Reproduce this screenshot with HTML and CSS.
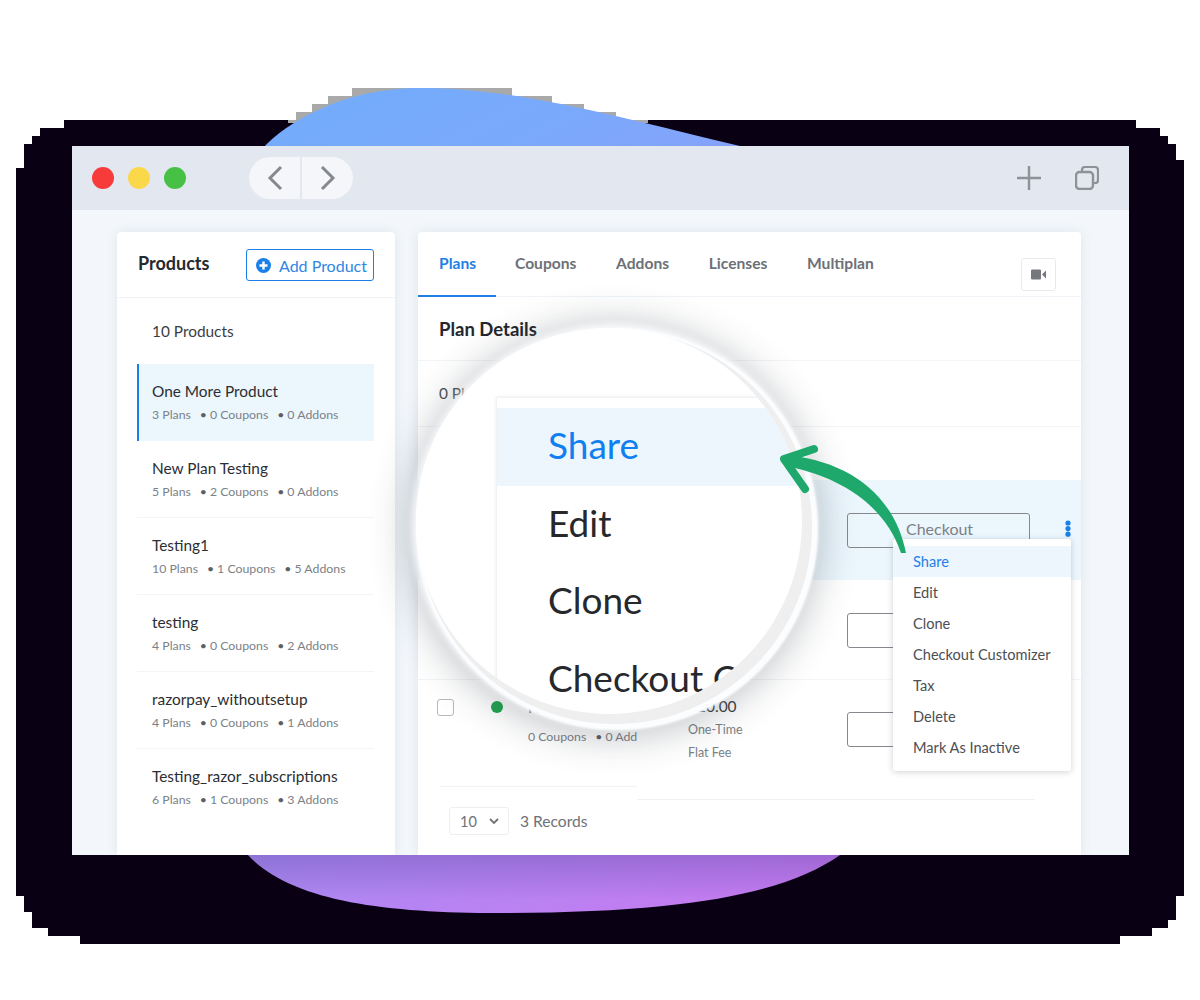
FILE: index.html
```html
<!DOCTYPE html>
<html>
<head>
	<meta charset="utf-8">
	<title>Products</title>
	<link rel="stylesheet" href="styles.css">
</head>
<body>
<div class="stage">
	<svg class="backdrop" width="1200" height="1000" viewBox="0 0 1200 1000">
		<defs>
			<linearGradient id="blobfill" gradientUnits="userSpaceOnUse" x1="350" y1="100" x2="760" y2="900">
				<stop offset="0" stop-color="#74abfb"/>
				<stop offset="0.12" stop-color="#7aa9fb"/>
				<stop offset="1" stop-color="#c47bf0"/>
			</linearGradient>
			<linearGradient id="blobshade" gradientUnits="userSpaceOnUse" x1="0" y1="855" x2="0" y2="900">
				<stop offset="0" stop-color="#4a3a90" stop-opacity="0.3"/>
				<stop offset="1" stop-color="#4a3a90" stop-opacity="0"/>
			</linearGradient>
		</defs>
		<polygon fill="#0a0013" points="64,120 1136,120 1136,128 1160,128 1160,136 1168,136 1168,144 1176,144 1176,160 1184,160 1184,896 1176,896 1176,920 1168,920 1168,928 1152,928 1152,936 1120,936 1120,944 80,944 80,936 48,936 48,928 32,928 32,912 24,912 24,896 16,896 16,168 24,168 24,144 32,144 32,136 40,136 40,128 64,128"/>
		<polygon fill="#a9a9a9" points="352,88 512,88 512,96 552,96 552,104 584,104 584,112 616,112 616,120 648,120 648,123 288,123 288,120 296,120 296,112 312,112 312,104 328,104 328,96 352,96"/>
		<path fill="url(#blobfill)" d="M265 146 C285 125 340 88 420 88 C520 88 620 118 740 146 L840 855 C790 890 700 913 500 913 C380 913 290 900 248 855 Z"/>
		<path fill="url(#blobshade)" d="M248 855 L840 855 C790 890 700 913 500 913 C380 913 290 900 248 855 Z"/>
	</svg>

	<div class="window">
		<div class="titlebar">
			<div class="lights">
				<span class="light red"></span>
				<span class="light yellow"></span>
				<span class="light green"></span>
			</div>
			<div class="nav-pill">
				<div class="nav-half">
					<svg width="18" height="26" viewBox="0 0 18 26"><path d="M15 2 L4 13 L15 24" fill="none" stroke="#85888d" stroke-width="3"/></svg>
				</div>
				<div class="nav-half">
					<svg width="18" height="26" viewBox="0 0 18 26"><path d="M3 2 L14 13 L3 24" fill="none" stroke="#85888d" stroke-width="3"/></svg>
				</div>
			</div>
			<div class="title-tools">
				<svg width="24" height="24" viewBox="0 0 24 24"><path d="M12 0 V24 M0 12 H24" stroke="#8e9196" stroke-width="2.4"/></svg>
				<svg width="24" height="24" viewBox="0 0 24 24"><path d="M7 5 V4 Q7 1 10 1 H20 Q23 1 23 4 V14 Q23 17 20 17 H19" fill="none" stroke="#8e9196" stroke-width="2.2"/><rect x="1" y="6" width="17" height="17" rx="3.5" fill="none" stroke="#8e9196" stroke-width="2.4"/></svg>
			</div>
		</div>

		<div class="workspace">
			<aside class="sidebar">
				<div class="side-head">
					<h2 class="side-title">Products</h2>
					<button class="add-btn">
						<svg class="add-icon" width="15" height="15" viewBox="0 0 15 15"><circle cx="7.5" cy="7.5" r="7.5" fill="#1a7fe8"/><path d="M7.5 3.5 V11.5 M3.5 7.5 H11.5" stroke="#fff" stroke-width="2.4"/></svg>
						Add Product
					</button>
				</div>
				<div class="side-count">10 Products</div>
				<ul class="product-list">
					<li class="product active">
						<div class="product-name">One More Product</div>
						<div class="product-meta"><span>3 Plans</span><span class="bullet">0 Coupons</span><span class="bullet">0 Addons</span></div>
					</li>
					<li class="product">
						<div class="product-name">New Plan Testing</div>
						<div class="product-meta"><span>5 Plans</span><span class="bullet">2 Coupons</span><span class="bullet">0 Addons</span></div>
					</li>
					<li class="product">
						<div class="product-name">Testing1</div>
						<div class="product-meta"><span>10 Plans</span><span class="bullet">1 Coupons</span><span class="bullet">5 Addons</span></div>
					</li>
					<li class="product">
						<div class="product-name">testing</div>
						<div class="product-meta"><span>4 Plans</span><span class="bullet">0 Coupons</span><span class="bullet">2 Addons</span></div>
					</li>
					<li class="product">
						<div class="product-name">razorpay_withoutsetup</div>
						<div class="product-meta"><span>4 Plans</span><span class="bullet">0 Coupons</span><span class="bullet">1 Addons</span></div>
					</li>
					<li class="product">
						<div class="product-name">Testing_razor_subscriptions</div>
						<div class="product-meta"><span>6 Plans</span><span class="bullet">1 Coupons</span><span class="bullet">3 Addons</span></div>
					</li>
				</ul>
			</aside>

			<section class="panel">
				<div class="tabs">
					<a class="tab current">Plans</a>
					<a class="tab">Coupons</a>
					<a class="tab">Addons</a>
					<a class="tab">Licenses</a>
					<a class="tab">Multiplan</a>
					<div class="video-btn">
						<svg width="15" height="11" viewBox="0 0 15 11"><rect x="0" y="0.5" width="10" height="10" rx="1" fill="#75787c"/><path d="M11 5.5 L15 1.5 V9.5 Z" fill="#75787c"/></svg>
					</div>
				</div>
				<div class="plan-head">Plan Details</div>
				<div class="plan-count">0 Plans</div>
				<div class="table-head"></div>
				<div class="plan-row picked">
					<div class="cell-btn">
						<div class="checkout-btn">Checkout</div>
					</div>
					<svg class="kebab" width="6" height="18" viewBox="0 0 6 18"><circle cx="3" cy="3" r="2.6" fill="#1a7fe8"/><circle cx="3" cy="8.6" r="2.6" fill="#1a7fe8"/><circle cx="3" cy="14.2" r="2.6" fill="#1a7fe8"/></svg>
				</div>
				<div class="plan-row">
					<div class="cell-btn">
						<div class="checkout-btn"></div>
					</div>
				</div>
				<div class="plan-row last">
					<span class="check"></span>
					<span class="dot"></span>
					<div class="plan-name">
						<div class="plan-title">Fa</div>
						<div class="product-meta"><span>0 Coupons</span><span class="bullet">0 Add</span></div>
					</div>
					<div class="plan-price">
						<div class="price">$10.00</div>
						<div class="price-note">One-Time</div>
						<div class="price-note">Flat Fee</div>
					</div>
					<div class="cell-btn">
						<div class="checkout-btn"></div>
					</div>
				</div>
				<div class="rules">
					<span class="rule-left"></span>
					<span class="rule-right"></span>
				</div>
				<div class="table-foot">
					<div class="page-size">
						<span>10</span>
						<svg width="10" height="7" viewBox="0 0 10 7"><path d="M1 1 L5 5 L9 1" fill="none" stroke="#6f7378" stroke-width="1.8"/></svg>
					</div>
					<span class="records">3 Records</span>
				</div>
			</section>
		</div>
	</div>

	<ul class="menu">
		<li class="menu-item on">Share</li>
		<li class="menu-item">Edit</li>
		<li class="menu-item">Clone</li>
		<li class="menu-item">Checkout Customizer</li>
		<li class="menu-item">Tax</li>
		<li class="menu-item">Delete</li>
		<li class="menu-item">Mark As Inactive</li>
	</ul>

	<div class="lens">
		<div class="lens-rim"></div>
		<div class="lens-face">
			<ul class="lens-menu">
				<li class="lens-item on">Share</li>
				<li class="lens-item">Edit</li>
				<li class="lens-item">Clone</li>
				<li class="lens-item">Checkout C</li>
			</ul>
		</div>
	</div>

	<svg class="arrow" width="1200" height="1000" viewBox="0 0 1200 1000">
		<path d="M786 455 C840 460 893 488 906 553 L901 553 C884 503 838 477 790 467 Z" fill="#1fa86b"/>
		<path d="M814 449 L784 459 L805 489" fill="none" stroke="#1fa86b" stroke-width="8" stroke-linecap="round" stroke-linejoin="round"/>
	</svg>
</div>
</body>
</html>
```

FILE: styles.css
```css
* {
	box-sizing: border-box;
}
html, body {
	margin: 0;
	padding: 0;
	background: #fff;
}
ul {
	list-style: none;
	margin: 0;
	padding: 0;
}
.stage {
	position: relative;
	width: 1200px;
	height: 1000px;
	padding: 146px 71px 0 72px;
	overflow: hidden;
	font-family: "Lato", "Liberation Sans", sans-serif;
	color: #2b2e33;
}
.backdrop, .arrow {
	position: absolute;
	left: 0;
	top: 0;
}

/* window */
.window {
	position: relative;
	height: 709px;
	background: #f3f7fb;
	overflow: hidden;
}
.titlebar {
	display: flex;
	align-items: center;
	height: 64px;
	padding: 0 30px 0 20px;
	background: #e3e7f0;
}
.lights {
	display: flex;
	gap: 14px;
}
.light {
	width: 22px;
	height: 22px;
	border-radius: 50%;
}
.red { background: #f73a3a; }
.yellow { background: #fbd84a; }
.green { background: #46c146; }
.nav-pill {
	display: flex;
	gap: 2px;
	margin-left: 63px;
}
.nav-half {
	display: flex;
	align-items: center;
	justify-content: center;
	width: 51px;
	height: 42px;
	background: #f4f6f9;
}
.nav-half:first-child { border-radius: 21px 0 0 21px; }
.nav-half:last-child { border-radius: 0 21px 21px 0; }
.title-tools {
	display: flex;
	gap: 34px;
	margin-left: auto;
}
.workspace {
	display: flex;
	gap: 23px;
	padding: 22px 48px 0 45px;
	height: 645px;
}

/* products column */
.sidebar {
	width: 278px;
	background: #fff;
	border-radius: 4px 4px 0 0;
	box-shadow: 0 0 12px rgba(60, 80, 110, 0.1);
}
.side-head {
	display: flex;
	align-items: center;
	justify-content: space-between;
	height: 66px;
	padding: 0 21px;
	border-bottom: 1px solid #f1f3f6;
}
.side-title {
	margin: -4px 0 0;
	font-size: 18px;
	font-weight: 700;
	color: #26292e;
}
.add-btn {
	display: flex;
	align-items: center;
	gap: 8px;
	width: 128px;
	height: 32px;
	margin-top: 1px;
	padding: 0 9px;
	background: #fff;
	border: 1px solid #1a7fe8;
	border-radius: 3px;
	color: #2f86e4;
	font-family: inherit;
	font-size: 16px;
	white-space: nowrap;
}
.add-icon {
	flex: none;
}
.side-count {
	padding: 24px 35px 0;
	height: 66px;
	font-size: 15.4px;
	color: #3b3e43;
}
.product-list {
	margin: 0 21px 0 20px;
}
.product {
	height: 77px;
	padding: 18px 15px 0;
	border-bottom: 1px solid #f2f4f7;
}
.product:last-child {
	border-bottom: 0;
}
.product.active {
	height: 77px;
	background: #ecf6fd;
	border-bottom: 0;
	border-left: 2px solid #1a7fe8;
	padding-left: 13px;
}
.product-name {
	font-size: 15.4px;
	line-height: 18px;
	color: #2b2e33;
}
.product-meta {
	display: flex;
	gap: 9px;
	margin-top: 7px;
	font-size: 12.3px;
	line-height: 16px;
	white-space: nowrap;
	color: #7b8187;
}
.bullet::before {
	content: "•";
	margin-right: 3px;
	color: #5b6066;
}

/* plans panel */
.panel {
	width: 663px;
	background: #fff;
	border-radius: 4px 4px 0 0;
	box-shadow: 0 0 12px rgba(60, 80, 110, 0.1);
}
.tabs {
	position: relative;
	display: flex;
	height: 65px;
	border-bottom: 1px solid #f0f3f8;
}
.tab {
	padding-top: 22px;
	margin-left: 39.7px;
	font-size: 15.6px;
	font-weight: 700;
	line-height: 18px;
	color: #6c7177;
}
.tab.current {
	width: 78px;
	margin-left: 0;
	padding-left: 21px;
	height: 65px;
	margin-bottom: -1px;
	color: #1f7fe6;
	border-bottom: 2px solid #1f7fe6;
}
.tab.current + .tab {
	margin-left: 19px;
}
.video-btn {
	display: flex;
	align-items: center;
	justify-content: center;
	width: 35px;
	height: 33px;
	margin: 26px 25px 0 auto;
	background: #fff;
	border: 1px solid #e8eaee;
	border-radius: 3px;
}
.plan-head {
	height: 64px;
	padding: 22px 21px 0;
	font-size: 18.5px;
	font-weight: 700;
	line-height: 20px;
	color: #24272c;
	border-bottom: 1px solid #f2f4f7;
}
.plan-count {
	height: 66px;
	padding: 23px 21px 0;
	font-size: 15.4px;
	line-height: 18px;
	color: #4c5056;
	border-bottom: 1px solid #f2f4f7;
}
.table-head {
	height: 53px;
}
.plan-row {
	display: grid;
	grid-template-columns: 54px 37px 160px 159px 183px 1fr;
	column-gap: 0;
	align-items: start;
	height: 100px;
	padding-left: 19px;
	border-bottom: 1px solid #f2f4f7;
}
.plan-row.picked {
	background: #ebf6fd;
	border-bottom: 0;
}
.plan-row.last {
	height: 106px;
	border-bottom: 0;
}
.cell-btn {
	grid-column: 5;
	padding-top: 33px;
}
.plan-row.last .cell-btn {
	padding-top: 32px;
}
.checkout-btn {
	height: 35px;
	padding: 5px 0 0 58px;
	font-size: 16px;
	line-height: 20px;
	color: #7d8187;
	border: 1px solid #85898e;
	border-radius: 3px;
}
.kebab {
	grid-column: 6;
	margin: 40px 0 0 35px;
}
.check {
	width: 17px;
	height: 17px;
	margin-top: 19px;
	border: 1px solid #b5b8bd;
	border-radius: 3px;
	background: #fff;
}
.dot {
	width: 12px;
	height: 12px;
	margin-top: 21px;
	border-radius: 50%;
	background: #22a550;
}
.plan-name {
	padding-top: 18px;
}
.plan-title {
	font-size: 15px;
	line-height: 18px;
	color: #555;
}
.plan-name .product-meta {
	margin-top: 13px;
}
.price {
	margin-top: 16px;
	font-size: 15.5px;
	line-height: 20px;
	color: #3e4146;
}
.price-note {
	margin-top: 5px;
	font-size: 12.5px;
	line-height: 18px;
	color: #7b8187;
}
.rules {
	display: flex;
	align-items: flex-start;
	height: 14px;
	padding-left: 22px;
}
.rule-left {
	width: 197px;
	height: 1px;
	background: #f0f2f5;
}
.rule-right {
	width: 398px;
	height: 1px;
	margin-top: 13px;
	background: #f0f2f5;
}
.table-foot {
	display: flex;
	align-items: center;
	gap: 11px;
	padding: 7px 0 0 31px;
}
.page-size {
	display: flex;
	align-items: center;
	justify-content: space-between;
	width: 60px;
	height: 28px;
	padding: 0 9px 0 10px;
	font-size: 14.5px;
	color: #6e7277;
	border: 1px solid #eceef1;
	border-radius: 3px;
}
.records {
	font-size: 15.6px;
	color: #6e7277;
}

/* dropdown over the row */
.menu {
	position: absolute;
	left: 893px;
	top: 539px;
	width: 178px;
	height: 232px;
	padding-top: 7px;
	background: #fff;
	border-radius: 3px;
	box-shadow: 0 1px 6px rgba(40, 50, 70, 0.22);
}
.menu-item {
	height: 31px;
	padding-left: 20px;
	font-size: 14.6px;
	line-height: 31px;
	color: #4c4f54;
}
.menu-item.on {
	background: #edf6fd;
	color: #1f7fe6;
}

/* magnifier */
.lens {
	position: absolute;
	left: 416px;
	top: 328px;
	width: 396px;
	height: 396px;
	border-radius: 50%;
	background: #fbfdff;
	box-shadow: 3px 3px 2px 3px #fbfdff, 0 0 6px 5px rgba(251, 253, 255, 0.85), 0 4px 38px 8px rgba(40, 50, 60, 0.3);
}
.lens-rim {
	position: absolute;
	left: 2px;
	top: 2px;
	width: 394px;
	height: 394px;
	border-radius: 50%;
	background: #efefef;
}
.lens-face {
	position: absolute;
	left: 0;
	top: 0;
	width: 386px;
	height: 386px;
	padding: 70px 0 0 81px;
	border-radius: 50%;
	background: #fff;
	overflow: hidden;
}
.lens-menu {
	width: 400px;
	box-shadow: -1px -1px 3px rgba(40, 50, 70, 0.1);
	padding-top: 10px;
}
.lens-item {
	height: 77.5px;
	padding-left: 51px;
	font-size: 37px;
	line-height: 74px;
	white-space: nowrap;
	color: #26282c;
}
.lens-item.on {
	background: #edf6fd;
	color: #1080f0;
}
```
